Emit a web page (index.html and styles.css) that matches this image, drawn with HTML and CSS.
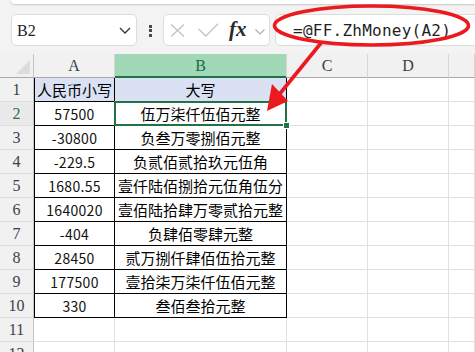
FILE: index.html
```html
<!DOCTYPE html>
<html lang="zh">
<head>
<meta charset="utf-8">
<link rel="stylesheet" href="styles.css">
</head>
<body>
<div class="topbar"></div>
<div class="toolbar">
  <div class="namebox">
    <span class="ref">B2</span>
    <svg class="chev" width="12" height="7" viewBox="0 0 12 7"><polyline points="1,1 6,6 11,1" fill="none" stroke="#333" stroke-width="1.3"/></svg>
  </div>
  <div class="dots"><i></i><i></i><i></i></div>
  <div class="fxbox">
    <svg class="ico-x" width="15" height="13" viewBox="0 0 15 13"><path d="M1 0.5 L14 12.5 M14 0.5 L1 12.5" stroke="#c4c4c4" stroke-width="1.4" fill="none"/></svg>
    <svg class="ico-ok" width="21" height="14" viewBox="0 0 21 14"><polyline points="0.5,6 8,13 20,0.8" fill="none" stroke="#c4c4c4" stroke-width="1.4"/></svg>
    <span class="fx">fx</span>
    <svg class="chev2" width="10" height="6" viewBox="0 0 10 6"><polyline points="0.5,0.5 5,5 9.5,0.5" fill="none" stroke="#b0b0b0" stroke-width="1.2"/></svg>
  </div>
  <div class="formula">=@FF.ZhMoney(A2)</div>
</div>

<div class="sheet">
  <div class="hd corner"><span class="tri"></span></div>
  <div class="hd col">A</div>
  <div class="hd col sel">B</div>
  <div class="hd col">C</div>
  <div class="hd col">D</div>
  <div class="hd col"></div>

  <div class="rh">1</div>
  <div class="c ta head cjk">人民币小写</div>
  <div class="c tb head cjk">大写</div>
  <div class="c"></div><div class="c"></div><div class="c"></div>

  <div class="rh selrow">2</div>
  <div class="c ta num">57500</div>
  <div class="c tb cjk active">伍万柒仟伍佰元整<span class="selbox"></span><span class="handle"></span></div>
  <div class="c"></div><div class="c"></div><div class="c"></div>

  <div class="rh">3</div>
  <div class="c ta num">-30800</div>
  <div class="c tb cjk">负叁万零捌佰元整</div>
  <div class="c"></div><div class="c"></div><div class="c"></div>

  <div class="rh">4</div>
  <div class="c ta num">-229.5</div>
  <div class="c tb cjk">负贰佰贰拾玖元伍角</div>
  <div class="c"></div><div class="c"></div><div class="c"></div>

  <div class="rh">5</div>
  <div class="c ta num">1680.55</div>
  <div class="c tb cjk">壹仟陆佰捌拾元伍角伍分</div>
  <div class="c"></div><div class="c"></div><div class="c"></div>

  <div class="rh">6</div>
  <div class="c ta num">1640020</div>
  <div class="c tb cjk">壹佰陆拾肆万零贰拾元整</div>
  <div class="c"></div><div class="c"></div><div class="c"></div>

  <div class="rh">7</div>
  <div class="c ta num">-404</div>
  <div class="c tb cjk">负肆佰零肆元整</div>
  <div class="c"></div><div class="c"></div><div class="c"></div>

  <div class="rh">8</div>
  <div class="c ta num">28450</div>
  <div class="c tb cjk">贰万捌仟肆佰伍拾元整</div>
  <div class="c"></div><div class="c"></div><div class="c"></div>

  <div class="rh">9</div>
  <div class="c ta num">177500</div>
  <div class="c tb cjk">壹拾柒万柒仟伍佰元整</div>
  <div class="c"></div><div class="c"></div><div class="c"></div>

  <div class="rh">10</div>
  <div class="c ta num">330</div>
  <div class="c tb cjk">叁佰叁拾元整</div>
  <div class="c"></div><div class="c"></div><div class="c"></div>

  <div class="rh">11</div>
  <div class="c"></div><div class="c"></div><div class="c"></div><div class="c"></div><div class="c"></div>

  <div class="rh">12</div>
  <div class="c"></div><div class="c"></div><div class="c"></div><div class="c"></div><div class="c"></div>
</div>

<svg class="annot" width="475" height="352" viewBox="0 0 475 352">
  <ellipse cx="371.5" cy="25.5" rx="97" ry="19.5" fill="none" stroke="#ea1a1f" stroke-width="3.6"/>
  <line x1="321" y1="43" x2="278" y2="96" stroke="#ea1a1f" stroke-width="3.6"/>
  <polygon points="267,111 272,84 288,101" fill="#ea1a1f"/>
</svg>
</body>
</html>
```

FILE: styles.css
```css
html, body {
  margin: 0;
  padding: 0;
}
body {
  width: 475px;
  height: 352px;
  overflow: hidden;
  position: relative;
  background: #f3f3f3;
  font-family: "Liberation Sans", Arial, sans-serif;
}

.topbar {
  height: 4px;
  margin-left: 11px;
  background: #ffffff;
  border-radius: 0 0 0 6px;
  box-shadow: 0 1px 2px rgba(0, 0, 0, 0.18);
}

.toolbar {
  display: flex;
  align-items: center;
  height: 32px;
  padding: 10px 0 8px 11px;
}

.namebox {
  box-sizing: border-box;
  width: 126px;
  height: 32px;
  flex: none;
  display: flex;
  align-items: center;
  justify-content: space-between;
  padding: 0 5px 0 5px;
  background: #fff;
  border: 1px solid #dcdcdc;
  border-radius: 5px;
}
.ref {
  font-family: "Liberation Serif", "Times New Roman", serif;
  font-size: 16px;
  color: #222;
  padding-top: 1px;
}
.chev { margin-top: 1px; }

.dots {
  flex: none;
  display: flex;
  flex-direction: column;
  gap: 1.5px;
  margin-left: 12px;
  margin-top: 1px;
}
.dots i {
  display: block;
  width: 3px;
  height: 3px;
  background: #4a4a4a;
}

.fxbox {
  box-sizing: border-box;
  flex: none;
  width: 107px;
  height: 32px;
  margin-left: 11px;
  display: flex;
  align-items: center;
  padding-left: 6px;
  background: #fff;
  border: 1px solid #dcdcdc;
  border-radius: 5px;
}
.ico-x { margin-top: 1px; }
.ico-ok { margin-left: 13px; margin-top: -1px; }
.fx {
  margin-left: 10px;
  font-family: "Liberation Serif", "Times New Roman", serif;
  font-style: italic;
  font-weight: bold;
  font-size: 21px;
  color: #2a2a2a;
  line-height: 1;
  margin-top: -2px;
}
.chev2 { margin-left: 8px; margin-top: 3px; }

.formula {
  box-sizing: border-box;
  flex: none;
  width: 210px;
  height: 32px;
  margin-left: 5px;
  display: flex;
  align-items: center;
  padding-left: 17px;
  background: #fff;
  border: 1px solid #dcdcdc;
  border-radius: 5px;
  font-family: "DejaVu Sans Mono", "Liberation Mono", monospace;
  font-size: 16px;
  letter-spacing: 0.25px;
  color: #1f1f1f;
}

.sheet {
  display: grid;
  grid-template-columns: 34px 81px 172px 81px 81px 1fr;
  grid-auto-rows: 24px;
  background: #fff;
}
.sheet > div {
  box-sizing: border-box;
  border-right: 1px solid #e1e1e1;
  border-bottom: 1px solid #e1e1e1;
  display: flex;
  align-items: center;
  justify-content: center;
  overflow: visible;
}

.hd {
  background: #f1f1f1;
  border-bottom-color: #a9a9a9 !important;
  border-right-color: #d6d6d6 !important;
  font-family: "Liberation Serif", "Times New Roman", serif;
  font-size: 16px;
  color: #3a3f4a;
}
.hd.corner {
  border-right-color: #c4c4c4 !important;
  position: relative;
}
.tri {
  position: absolute;
  right: 3px;
  bottom: 3px;
  width: 0;
  height: 0;
  border-left: 14px solid transparent;
  border-bottom: 14px solid #dcdcdc;
}
.hd.sel {
  background: #a0d8b8;
  color: #1d6b40;
  box-shadow: inset 0 -1px 0 #217346;
  border-bottom-color: #217346 !important;
}

.rh {
  background: #f1f1f1;
  border-right-color: #c4c4c4 !important;
  border-bottom-color: #dedede !important;
  font-family: "Liberation Serif", "Times New Roman", serif;
  font-size: 16px;
  color: #3a3f4a;
}
.rh.selrow {
  color: #217346;
  background: #e9e9e9;
}

.c { background: #fff; }

.ta {
  border-left: 1px solid #000;
  border-right-color: #000 !important;
  border-bottom-color: #000 !important;
}
.tb {
  border-right-color: #000 !important;
  border-bottom-color: #000 !important;
}
.head { background: #d9e1f3; }

.cjk {
  font-family: "Noto Sans CJK SC", "Noto Sans CJK JP", sans-serif;
  font-size: 15px;
  color: #000;
  white-space: nowrap;
}
.num {
  font-family: "Noto Sans CJK SC", "Noto Sans", sans-serif;
  font-size: 14px;
  letter-spacing: 0.3px;
  color: #111;
}

.active { position: relative; }
.selbox {
  position: absolute;
  left: -1px;
  top: -1px;
  right: -1px;
  bottom: -1px;
  border: 2px solid #217346;
  pointer-events: none;
}
.handle {
  position: absolute;
  right: -4px;
  bottom: -4px;
  width: 5px;
  height: 5px;
  background: #217346;
  border: 1px solid #fff;
}

.annot {
  position: absolute;
  left: 0;
  top: 0;
  pointer-events: none;
}
```
